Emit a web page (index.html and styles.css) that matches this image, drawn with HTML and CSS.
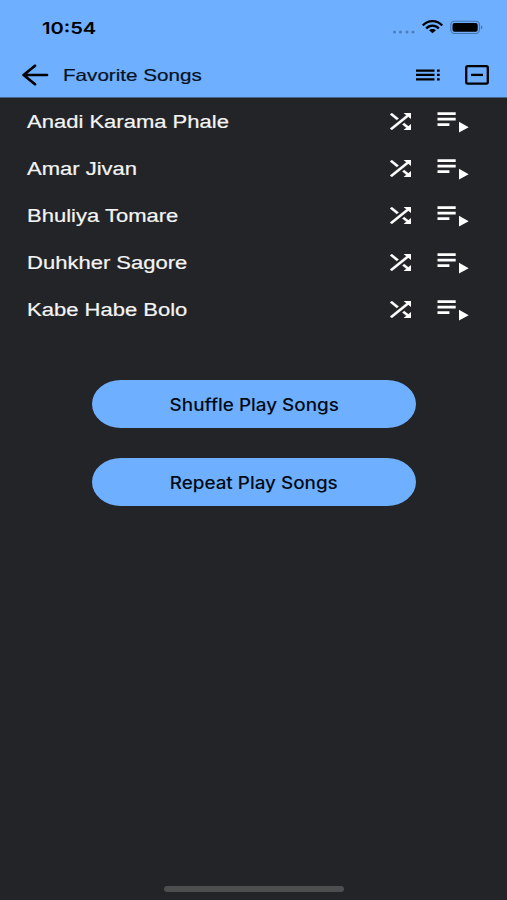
FILE: index.html
```html
<!DOCTYPE html>
<html lang="en">
<head>
<meta charset="utf-8">
<title>Favorite Songs</title>
<link rel="stylesheet" href="styles.css">
</head>
<body>
<svg class="defs" aria-hidden="true">
  <symbol id="shuffle" viewBox="4 4 16 16" preserveAspectRatio="none"><path stroke="#fff" stroke-width=".25" d="M10.59 9.17L5.41 4 4 5.41l5.17 5.17 1.42-1.41zM14.5 4l2.04 2.04L4 18.59 5.41 20 17.96 7.46 20 9.5V4h-5.500zm.33 9.410l-1.410 1.410 3.130 3.130L14.500 20H20v-5.500l-2.040 2.040-3.130-3.130z"/></symbol>
  <symbol id="queue" viewBox="0 0 32 21"><path d="M.5 .3H18.700V3H.5zM.5 5.700H18.700V8.400H.5zM.5 11.200H12.400V13.900H.5zM22 9.800 31.700 15.200 22 20.600z"/></symbol>
</svg>
<header class="top">
  <div class="status">
    <span class="time">10:54</span>
    <svg class="signals" viewBox="0 0 92 16">
      <g fill="#4e7db5"><circle cx="3.500" cy="12" r="1.500"/><circle cx="9.500" cy="12" r="1.500"/><circle cx="16" cy="12" r="1.500"/><circle cx="22" cy="12" r="1.500"/></g>
      <g fill="none" stroke="#000" stroke-width="2.300"><path d="M31.800 5.500C37-.3 46-.3 51.200 5.500"/><path d="M35.200 8.600C38.700 4.700 44.300 4.700 47.800 8.600"/></g>
      <path d="M41.500 13.200 38.100 10.300C39.900 8.500 43.100 8.500 44.900 10.300z"/>
      <rect x="59.800" y="1.200" width="28.600" height="12.300" rx="3.600" fill="none" stroke="#4776ad" stroke-width="1.100"/>
      <rect x="61.500" y="2.900" width="25.200" height="8.900" rx="2"/>
      <path d="M89.800 5.400C92 6 92 8.700 89.800 9.300z" fill="#4776ad"/>
    </svg>
  </div>
  <div class="bar">
    <svg class="back" viewBox="0 0 28 22" fill="none" stroke="#000" stroke-width="2.700" stroke-linecap="round" stroke-linejoin="round"><path d="M26 11H2.600M14 1.800 2.600 11 14 20.200"/></svg>
    <h1 class="title"><span>Favorite Songs</span></h1>
    <svg class="toc" viewBox="0 0 24 12"><path d="M0 .4H18.500V2.700H0zM0 4.800H18.500V7.100H0zM0 9.200H18.500V11.500H0zM21 .4H23.700V2.700H21zM21 4.800H23.700V7.100H21zM21 9.200H23.700V11.500H21z"/></svg>
    <svg class="minus" viewBox="0 0 24 20" fill="none" stroke="#000" stroke-width="2.300"><rect x="1.200" y="1.200" width="21.600" height="17.400" rx="1.600"/><path d="M6 9.900H18"/></svg>
  </div>
</header>
<main>
  <ul class="songs">
    <li><span class="name">Anadi Karama Phale</span><svg class="shuffle"><use href="#shuffle"/></svg><svg class="queue"><use href="#queue"/></svg></li>
    <li><span class="name">Amar Jivan</span><svg class="shuffle"><use href="#shuffle"/></svg><svg class="queue"><use href="#queue"/></svg></li>
    <li><span class="name">Bhuliya Tomare</span><svg class="shuffle"><use href="#shuffle"/></svg><svg class="queue"><use href="#queue"/></svg></li>
    <li><span class="name">Duhkher Sagore</span><svg class="shuffle"><use href="#shuffle"/></svg><svg class="queue"><use href="#queue"/></svg></li>
    <li><span class="name">Kabe Habe Bolo</span><svg class="shuffle"><use href="#shuffle"/></svg><svg class="queue"><use href="#queue"/></svg></li>
  </ul>
  <div class="actions">
    <button><span>Shuffle Play Songs</span></button>
    <button><span>Repeat Play Songs</span></button>
  </div>
</main>
<footer><div class="home"></div></footer>
</body>
</html>
```
FILE: styles.css
```css
* { box-sizing: border-box; }
body {
  margin: 0;
  height: 900px;
  display: flex;
  flex-direction: column;
  background: #232428;
  color: #f4f4f4;
  font-family: "Liberation Sans", Arial, sans-serif;
  overflow: hidden;
}
.defs { display: none; }
svg { display: block; flex: none; }
.top { height: 98px; background: #6eafff; color: #000; border-bottom: 1px solid #45668f; }
.status {
  height: 54px;
  padding: 2px 24px 0 42px;
  display: flex;
  justify-content: space-between;
  align-items: center;
}
.time {
  font: 600 16.500px/20px Inter, sans-serif;
  transform: scaleX(1.220);
  transform-origin: left;
}
.signals { width: 92px; height: 16px; }
.bar { height: 43px; display: flex; align-items: center; padding: 0 18px 1px 21px; }
.back { width: 28px; height: 22px; }
.title { flex: 1; margin: 0 0 0 14px; font-size: 16.500px; line-height: 22px; font-weight: 400; color: #06121f; -webkit-text-stroke: .2px; }
.title span { display: inline-block; transform: scaleX(1.250); transform-origin: left; }
.toc { width: 24px; height: 12px; margin-right: 25px; }
.minus { width: 24px; height: 20px; }
.songs { list-style: none; margin: 0; padding: 1px 38px 0 27px; fill: #fff; }
.songs li { height: 46.900px; display: flex; align-items: center; }
.name { font-size: 18px; line-height: 24px; transform: scaleX(1.223); transform-origin: left; margin-right: auto; -webkit-text-stroke: .2px; }
.shuffle { width: 21px; height: 17px; margin: 0 26px 2px 0; }
.queue { width: 32px; height: 21px; }
.actions { display: flex; flex-direction: column; align-items: center; gap: 30px; margin: 47px 0 0 1px; }
button {
  width: 324px;
  height: 48px;
  border: 0;
  border-radius: 29px / 24px;
  background: #6eafff;
  color: #020a14;
  font: 500 17px/24px Inter, sans-serif;
  padding: 1px 0 0;
}
button span { display: inline-block; transform: scaleX(1.110); }
footer { margin-top: auto; height: 14px; display: flex; justify-content: center; }
.home { width: 180px; height: 6px; border-radius: 3px; background: #4d4e50; }
```
